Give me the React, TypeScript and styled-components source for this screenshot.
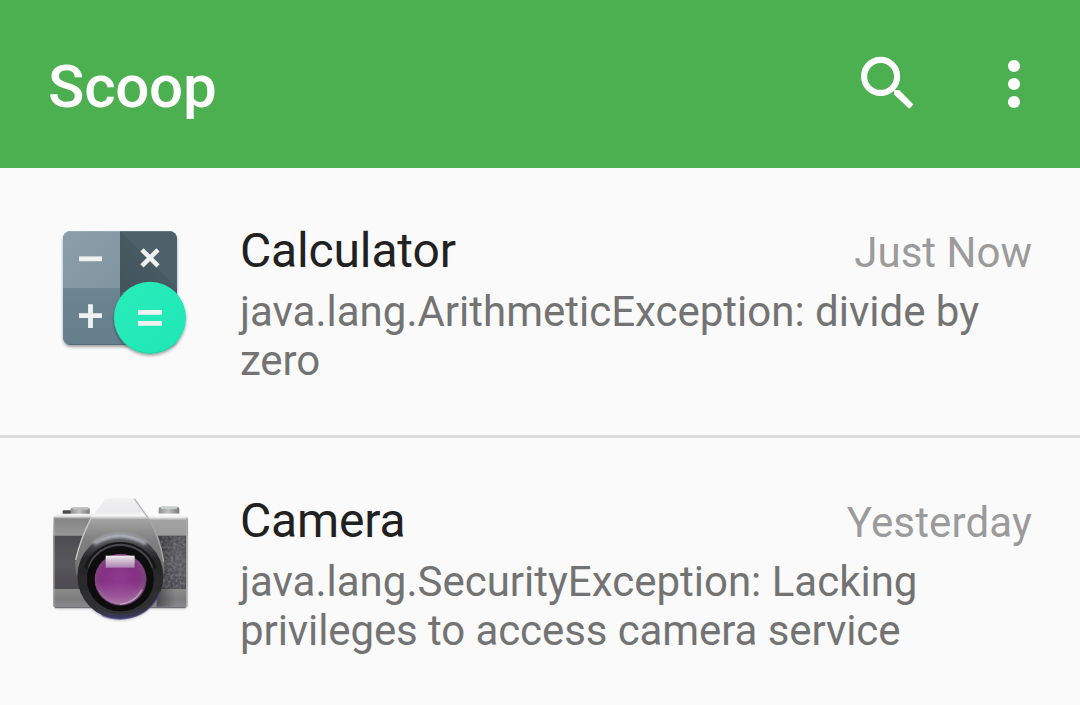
import React from 'react';
import styled, { createGlobalStyle } from 'styled-components';

const Global = createGlobalStyle`
  * { box-sizing: border-box; }
  body { margin: 0; background: #fafafa; font-family: Roboto, sans-serif; overflow: hidden; }
`;

const Toolbar = styled.header`
  height: 168px;
  background: #4caf50;
  display: flex;
  align-items: center;
  justify-content: space-between;
  padding: 0 50px 0 48px;
  color: #fff;
`;

const Title = styled.h1`
  margin: 6px 0 0;
  font-size: 60px;
  font-weight: 500;
  line-height: 72px;
  letter-spacing: -0.2px;
`;

const Actions = styled.div`
  display: flex;
  align-items: center;
  gap: 90px;
`;

const ActionButton = styled.button<{ $width: number }>`
  width: ${(p) => p.$width}px;
  height: 72px;
  padding: 0;
  border: 0;
  background: none;
  color: inherit;
  svg { display: block; }
`;

const Row = styled.section`
  height: 270px;
  display: flex;
  gap: 48px;
  padding: 48px;
  border-bottom: 3px solid #dadada;
`;

const IconBox = styled.div`
  width: 144px;
  height: 144px;
  flex: none;
  svg { display: block; overflow: visible; }
`;

const Body = styled.div`
  flex: 1;
  padding-top: 7px;
`;

const Head = styled.div`
  display: flex;
  justify-content: space-between;
  align-items: baseline;
  margin-bottom: 8px;
  height: 56px;
`;

const Name = styled.div`
  font-size: 48px;
  line-height: 56px;
  letter-spacing: -0.15px;
  color: #212121;
`;

const Time = styled.div<{ $tracking?: number }>`
  font-size: 42px;
  letter-spacing: ${(p) => p.$tracking ?? 0}px;
  color: #9b9b9b;
`;

const Description = styled.div`
  font-size: 42px;
  line-height: 49px;
  color: #737373;
`;

const Line = styled.span<{ $tracking?: number }>`
  display: block;
  white-space: nowrap;
  letter-spacing: ${(p) => p.$tracking ?? 0}px;
`;

function SearchIcon() {
  return (
    <svg width="56" height="72" viewBox="0 0 56 72" fill="none" stroke="currentColor">
      <circle cx="22.6" cy="28.4" r="16.5" strokeWidth="6.2" />
      <path d="M36 42h5.2L55.4 56.4 51.2 60.8 36 46.4z" fill="currentColor" stroke="none" />
    </svg>
  );
}

function MoreIcon() {
  return (
    <svg width="32" height="72" viewBox="0 0 32 72" fill="currentColor">
      <circle cx="16" cy="18" r="6.1" />
      <circle cx="16" cy="36" r="6.1" />
      <circle cx="16" cy="54" r="6.1" />
    </svg>
  );
}

function CalculatorIcon() {
  return (
    <svg width="144" height="144" viewBox="0 0 144 144">
      <defs>
        <clipPath id="calcClip"><rect x="15" y="15" width="114" height="114" rx="8" /></clipPath>
        <linearGradient id="calcLight" x1="0" y1="0" x2="1" y2="1">
          <stop offset="0" stopColor="#8a9fa9" /><stop offset="1" stopColor="#7f959f" />
        </linearGradient>
        <linearGradient id="calcMid" x1="0" y1="0" x2="0" y2="1">
          <stop offset="0" stopColor="#6b8591" /><stop offset="1" stopColor="#647e8b" />
        </linearGradient>
        <linearGradient id="calcShade" x1="72" y1="60" x2="105" y2="27" gradientUnits="userSpaceOnUse">
          <stop offset="0" stopColor="#43545c" /><stop offset="1" stopColor="#4a5c65" />
        </linearGradient>
        <linearGradient id="calcGreen" x1="0" y1="0" x2="1" y2="1">
          <stop offset="0" stopColor="#2bedbb" /><stop offset="1" stopColor="#1de6b5" />
        </linearGradient>
        <filter id="calcShadow" x="-20%" y="-20%" width="140%" height="140%">
          <feDropShadow dx="0" dy="2" stdDeviation="1.5" floodColor="#000" floodOpacity="0.36" />
        </filter>
      </defs>
      <rect x="15" y="15" width="114" height="114" rx="8" fill="#647e8b" filter="url(#calcShadow)" />
      <g clipPath="url(#calcClip)">
        <rect x="15" y="15" width="57" height="57" fill="url(#calcLight)" />
        <rect x="15" y="72" width="57" height="57" fill="url(#calcMid)" />
        <rect x="72" y="15" width="57" height="57" fill="#4d616a" />
        <rect x="72" y="72" width="57" height="57" fill="#4b5e67" />
        <path d="M72 15L129 72V76H72z" fill="url(#calcShade)" />
        <rect x="72" y="101" width="30" height="28" fill="#647e8b" />
        <rect x="15" y="15" width="114" height="1" fill="#fff" opacity="0.15" />
        <rect x="15" y="128" width="114" height="1" fill="#263238" opacity="0.25" />
      </g>
      <g fill="#f1f1f1">
        <path d="M31 40.4h23v4.8H31z" />
        <path d="M31 97.2h9.1v-9h4.8v9H54v4.8h-9.1v10h-4.8v-10H31z" />
      </g>
      <path d="M94 33.8l16 16M110 33.8L94 49.8" stroke="#f1f1f1" strokeWidth="4.5" />
      <circle cx="102" cy="101.8" r="36" fill="url(#calcGreen)" filter="url(#calcShadow)" />
      <path d="M66.5 105a35.6 35.6 0 0 0 71 0a35.6 34.5 0 0 1-71 0z" fill="#13b78e" opacity="0.5" />
      <path d="M90 94h24v4.8H90zM90 105h24v4.8H90z" fill="#f1f1f1" />
    </svg>
  );
}

function CameraIcon() {
  return (
    <svg width="144" height="144" viewBox="24 3 432 432">
      <defs>
        <linearGradient id="camTop" x1="0" y1="0" x2="0" y2="1">
          <stop offset="0" stopColor="#f6f6f6" /><stop offset="0.12" stopColor="#e6e6e6" />
          <stop offset="0.24" stopColor="#858585" /><stop offset="1" stopColor="#979797" />
        </linearGradient>
        <linearGradient id="camTopRight" x1="0" y1="0" x2="0" y2="1">
          <stop offset="0" stopColor="#fff" /><stop offset="0.16" stopColor="#f0f0f0" />
          <stop offset="0.3" stopColor="#a2a2a2" /><stop offset="1" stopColor="#9c9c9c" />
        </linearGradient>
        <linearGradient id="camGrip" x1="0" y1="0" x2="0" y2="1">
          <stop offset="0" stopColor="#4d4d50" /><stop offset="0.5" stopColor="#58575c" /><stop offset="1" stopColor="#4c4b50" />
        </linearGradient>
        <linearGradient id="camBase" x1="0" y1="0" x2="0" y2="1">
          <stop offset="0" stopColor="#8c8c8c" /><stop offset="0.55" stopColor="#7c7c7e" /><stop offset="1" stopColor="#8b8b8e" />
        </linearGradient>
        <linearGradient id="camPrism" x1="0" y1="40" x2="0" y2="290" gradientUnits="userSpaceOnUse">
          <stop offset="0" stopColor="#f1f1f1" /><stop offset="0.16" stopColor="#e9e9eb" />
          <stop offset="0.21" stopColor="#f6f6f6" /><stop offset="0.255" stopColor="#a2a2a2" />
          <stop offset="0.5" stopColor="#808080" /><stop offset="1" stopColor="#6d6d6d" />
        </linearGradient>
        <linearGradient id="camKnob" x1="0" y1="0" x2="1" y2="0">
          <stop offset="0" stopColor="#8d8d8d" /><stop offset="0.45" stopColor="#c2c2c2" /><stop offset="1" stopColor="#777" />
        </linearGradient>
        <linearGradient id="camRing" x1="0" y1="0" x2="0" y2="1">
          <stop offset="0" stopColor="#66676b" /><stop offset="0.12" stopColor="#4c4d50" />
          <stop offset="0.3" stopColor="#252527" /><stop offset="0.85" stopColor="#303032" />
          <stop offset="1" stopColor="#3d3b66" />
        </linearGradient>
        <radialGradient id="camPurple" cx="0.48" cy="0.48" r="0.55">
          <stop offset="0" stopColor="#8e3a8f" /><stop offset="0.65" stopColor="#843082" />
          <stop offset="0.88" stopColor="#7f467e" /><stop offset="1" stopColor="#40243f" />
        </radialGradient>
        <linearGradient id="camGlow" x1="0" y1="0" x2="0" y2="1">
          <stop offset="0.55" stopColor="#e5b5e4" stopOpacity="0" /><stop offset="1" stopColor="#e0c5df" stopOpacity="0.4" />
        </linearGradient>
        <linearGradient id="camGlint" x1="0" y1="0" x2="0" y2="1">
          <stop offset="0" stopColor="#f2ecf2" /><stop offset="0.3" stopColor="#d7cbd8" /><stop offset="1" stopColor="#ad80ae" />
        </linearGradient>
        <linearGradient id="camSideShade" x1="0" y1="0" x2="1" y2="0">
          <stop offset="0" stopColor="#16161c" stopOpacity="0.5" /><stop offset="1" stopColor="#16161c" stopOpacity="0" />
        </linearGradient>
        <filter id="camSoft" x="-10%" y="-10%" width="120%" height="120%"><feGaussianBlur stdDeviation="2.1" /></filter>
        <filter id="camArc" x="-30%" y="-60%" width="160%" height="220%"><feGaussianBlur stdDeviation="4" /></filter>
        <filter id="camShadow" x="-10%" y="-10%" width="120%" height="130%"><feGaussianBlur stdDeviation="5" /></filter>
        <filter id="camGrain" x="0" y="0" width="1" height="1">
          <feTurbulence type="fractalNoise" baseFrequency="0.12" numOctaves="2" seed="4" />
          <feColorMatrix values="0 0 0 0 0.55  0 0 0 0 0.54  0 0 0 0 0.62  0 0 0 1.6 -0.5" />
          <feComposite in2="SourceGraphic" operator="in" />
        </filter>
      </defs>
      <g filter="url(#camShadow)" fill="#444" opacity="0.4">
        <rect x="44" y="104" width="396" height="266" rx="6" />
        <circle cx="241" cy="279" r="127" />
      </g>
      <g filter="url(#camSoft)">
        <rect x="68" y="76" width="32" height="18" rx="3" fill="#4b4b4b" />
        <rect x="92" y="68" width="57" height="23" rx="5" fill="url(#camKnob)" />
        <rect x="98" y="67" width="48" height="7" rx="3" fill="#b9bdbd" />
        <rect x="356" y="66" width="62" height="25" rx="5" fill="url(#camKnob)" />
        <rect x="362" y="64" width="50" height="8" rx="4" fill="#c9cdcc" />
        <path d="M42 96Q43 87 62 86H424Q442 87 443 96V152H40z" fill="url(#camTop)" />
        <path d="M320 86H424Q442 87 443 96V152H340z" fill="url(#camTopRight)" />
        <rect x="40" y="152" width="402" height="161" fill="url(#camGrip)" />
        <path d="M40 312H442V361Q441 369 433 369H49Q41 369 40 361z" fill="url(#camBase)" />
        <path d="M42 96V365" stroke="#a8a8a8" strokeWidth="3" />
        <path d="M440 98V365" stroke="#aaa" strokeWidth="4" />
        <path d="M45 368H436" stroke="#696974" strokeWidth="3" />
        <rect x="350" y="154" width="55" height="211" fill="url(#camSideShade)" />
      </g>
      <rect x="350" y="154" width="86" height="157" fill="#fff" opacity="0.4" filter="url(#camGrain)" />
      <g filter="url(#camSoft)">
        <path d="M196 41Q240 37 283 41L328 104Q365 165 373 235Q370 310 346 325L130 320Q104 275 106 232Q120 162 154 98z" fill="url(#camPrism)" />
        <path d="M154 98Q121 162 107 225" stroke="#c9c9c9" strokeWidth="4" fill="none" />
        <path d="M328 104Q360 160 371 230" stroke="#a9a9a9" strokeWidth="4" fill="none" />
        <path d="M283 41L328 104" stroke="#b5b5b8" strokeWidth="4" fill="none" />
        <circle cx="241" cy="274" r="129" fill="url(#camRing)" />
      </g>
      <path d="M162 176Q239 128 318 176" stroke="#dde0ee" strokeWidth="11" fill="none" opacity="0.75" filter="url(#camArc)" />
      <g filter="url(#camSoft)">
        <path d="M136 250A110 106 0 0 1 346 250" stroke="#161618" strokeWidth="9" fill="none" />
        <path d="M146 248A99 94 0 0 1 337 248" stroke="#48484b" strokeWidth="5" fill="none" />
        <circle cx="241" cy="283" r="100" fill="#09090b" />
        <path d="M143 290A98 98 0 0 0 340 290A98 88 0 0 1 143 290" fill="#303032" />
        <circle cx="242" cy="284" r="78" fill="url(#camPurple)" />
        <circle cx="242" cy="284" r="74" fill="url(#camGlow)" />
        <path d="M239 358Q285 354 306 314" stroke="#d9c4d9" strokeWidth="4" fill="none" opacity="0.6" />
        <path d="M176 316Q192 350 239 358" stroke="#a58da6" strokeWidth="3" fill="none" opacity="0.5" />
        <path d="M197 212H284V248H197z" fill="url(#camGlint)" />
        <path d="M185 391Q240 415 300 388Q345 365 360 320" stroke="#504992" strokeWidth="4" fill="none" opacity="0.65" />
      </g>
    </svg>
  );
}

interface Crash {
  name: string;
  time: string;
  timeTracking?: number;
  icon: React.ReactNode;
  lines: { text: string; tracking?: number }[];
}

const crashes: Crash[] = [
  {
    name: 'Calculator',
    time: 'Just Now',
    icon: <CalculatorIcon />,
    lines: [{ text: 'java.lang.ArithmeticException: divide by' }, { text: 'zero', tracking: -0.15 }],
  },
  {
    name: 'Camera',
    time: 'Yesterday',
    timeTracking: 0.15,
    icon: <CameraIcon />,
    lines: [{ text: 'java.lang.SecurityException: Lacking' }, { text: 'privileges to access camera service', tracking: -0.09 }],
  },
];

export default function App() {
  return (
    <>
      <Global />
      <Toolbar>
        <Title>Scoop</Title>
        <Actions>
          <ActionButton $width={50} aria-label="Search"><SearchIcon /></ActionButton>
          <ActionButton $width={32} aria-label="More options"><MoreIcon /></ActionButton>
        </Actions>
      </Toolbar>
      {crashes.map((crash) => (
        <Row key={crash.name}>
          <IconBox>{crash.icon}</IconBox>
          <Body>
            <Head>
              <Name>{crash.name}</Name>
              <Time $tracking={crash.timeTracking}>{crash.time}</Time>
            </Head>
            <Description>
              {crash.lines.map((line) => (
                <Line key={line.text} $tracking={line.tracking}>{line.text}</Line>
              ))}
            </Description>
          </Body>
        </Row>
      ))}
    </>
  );
}
